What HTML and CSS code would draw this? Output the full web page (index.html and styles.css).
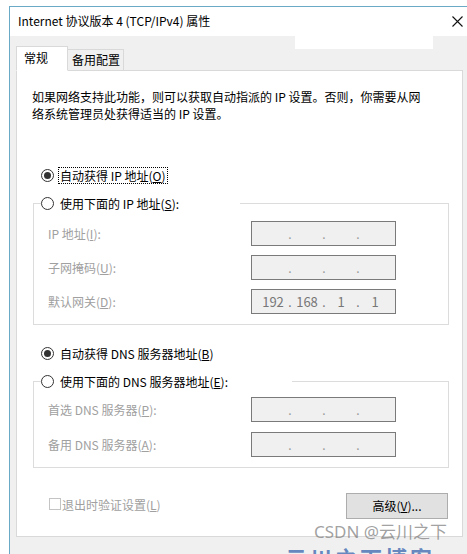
FILE: index.html
```html
<!DOCTYPE html>
<html lang="zh-CN">
<head>
<meta charset="utf-8">
<title>Internet 协议版本 4 (TCP/IPv4) 属性</title>
<link rel="stylesheet" href="styles.css">
</head>
<body>
<div class="window">
  <div class="titlebar">
    <span class="title">Internet 协议版本 4 (TCP/IPv4) 属性</span>
    <svg class="close" width="11" height="11" viewBox="0 0 11 11"><path d="M0.5 0.5L10.5 10.5M10.5 0.5L0.5 10.5" stroke="#111" stroke-width="1.1" fill="none"/></svg>
  </div>
  <div class="tabs">
    <div class="tab active">常规</div>
    <div class="tab">备用配置</div>
  </div>
  <div class="panel">
    <p class="intro">如果网络支持此功能，则可以获取自动指派的 IP 设置。否则，你需要从网<br>络系统管理员处获得适当的 IP 设置。</p>

    <div class="radio-row first">
      <span class="radio checked"></span><span class="rtext focus">自动获得 IP 地址(<u>O</u>)</span>
    </div>

    <fieldset class="group ip">
      <legend class="legend-ip"><span class="radio"></span><span class="rtext">使用下面的 IP 地址(<u>S</u>):</span></legend>
      <div class="fields">
        <span class="flabel">IP 地址(<u>I</u>):</span>
        <div class="ipbox"><span class="oct"></span><span class="dot">.</span><span class="oct"></span><span class="dot">.</span><span class="oct"></span><span class="dot">.</span><span class="oct"></span></div>
        <span class="flabel">子网掩码(<u>U</u>):</span>
        <div class="ipbox"><span class="oct"></span><span class="dot">.</span><span class="oct"></span><span class="dot">.</span><span class="oct"></span><span class="dot">.</span><span class="oct"></span></div>
        <span class="flabel">默认网关(<u>D</u>):</span>
        <div class="ipbox filled"><span class="oct">192</span><span class="dot">.</span><span class="oct">168</span><span class="dot">.</span><span class="oct">1</span><span class="dot">.</span><span class="oct">1</span></div>
      </div>
    </fieldset>

    <div class="radio-row second">
      <span class="radio checked"></span><span class="rtext">自动获得 DNS 服务器地址(<u>B</u>)</span>
    </div>

    <fieldset class="group dns">
      <legend class="legend-dns"><span class="radio"></span><span class="rtext">使用下面的 DNS 服务器地址(<u>E</u>):</span></legend>
      <div class="fields dns-fields">
        <span class="flabel">首选 DNS 服务器(<u>P</u>):</span>
        <div class="ipbox"><span class="oct"></span><span class="dot">.</span><span class="oct"></span><span class="dot">.</span><span class="oct"></span><span class="dot">.</span><span class="oct"></span></div>
        <span class="flabel">备用 DNS 服务器(<u>A</u>):</span>
        <div class="ipbox"><span class="oct"></span><span class="dot">.</span><span class="oct"></span><span class="dot">.</span><span class="oct"></span><span class="dot">.</span><span class="oct"></span></div>
      </div>
    </fieldset>

    <div class="footer">
      <div class="check"><span class="checkbox"></span><span class="ctext">退出时验证设置(<u>L</u>)</span></div>
      <div class="button">高级(<u>V</u>)...</div>
    </div>
  </div>
</div>
<div class="redact"></div>
<div class="watermark">CSDN @云川之下</div>
<div class="wm-blue">云川之下博客</div>
</body>
</html>
```

FILE: styles.css
```css
html, body {
  margin: 0;
  padding: 0;
  background: #ffffff;
  overflow: hidden;
  width: 467px;
  height: 554px;
}
body {
  font-family: "Noto Sans CJK SC", "Noto Sans", sans-serif;
  font-size: 12px;
  color: #000;
  position: relative;
}
.window {
  margin: 6px 0 0 9px;
  width: 470px;
  height: 560px;
  border-top: 1px solid #6aaac6;
  border-left: 1px solid #6aaac6;
  background: #f0f0f0;
}
.titlebar {
  height: 29px;
  background: #fff;
  display: flex;
  align-items: center;
  position: relative;
}
.title {
  margin-left: 8px;
  margin-top: -1px;
  font-size: 12px;
  line-height: 16px;
}
.close {
  position: absolute;
  left: 442px;
  top: 9px;
}
.tabs {
  display: flex;
  align-items: flex-end;
  padding: 10px 0 0 6px;
  height: 25px;
  position: relative;
  z-index: 2;
  margin-bottom: -1px;
}
.tab {
  box-sizing: border-box;
  height: 22px;
  border: 1px solid #d9d9d9;
  background: #f0f0f0;
  padding: 0 3px 0 4px;
  line-height: 20px;
  white-space: nowrap;
  margin-left: -1px;
}
.tab.active {
  margin-left: 0;
  height: 25px;
  width: 52px;
  background: #fff;
  border-bottom-color: #fff;
  padding-left: 7px;
  line-height: 21px;
  position: relative;
  z-index: 3;
}
.panel {
  box-sizing: border-box;
  margin-left: 6px;
  width: 447px;
  height: 467px;
  background: #fff;
  border: 1px solid #d9d9d9;
  padding: 17px 13px 0 15px;
  position: relative;
  z-index: 1;
}
.intro {
  margin: 0;
  line-height: 17px;
}
.radio-row {
  display: flex;
  align-items: center;
  height: 18px;
  margin-left: 9px;
}
.radio-row.first { margin-top: 44px; }
.radio-row.second { margin-top: 19px; }
.radio {
  box-sizing: border-box;
  width: 13px;
  height: 13px;
  border: 1px solid #333;
  border-radius: 50%;
  background: #fff;
  display: inline-flex;
  align-items: center;
  justify-content: center;
  flex: none;
}
.radio.checked::after {
  content: "";
  width: 7px;
  height: 7px;
  border-radius: 50%;
  background: #333;
}
.rtext {
  margin-left: 4px;
  border: 1px solid transparent;
  padding: 0 1px;
  line-height: 15px;
  white-space: nowrap;
}
.rtext.focus { border: 1px dotted #000; }
.group {
  margin: 10px 0 0 1px;
  padding: 0 0 10px 14px;
  border: 1px solid #dcdcdc;
  min-width: 0;
}
.group legend {
  display: flex;
  align-items: center;
  height: 18px;
  padding: 0;
  margin-left: -7px;
  box-sizing: border-box;
}
.legend-ip { width: 199px; }
.legend-dns { width: 251px; }
.fields {
  display: grid;
  grid-template-columns: 203px 145px;
  row-gap: 9px;
  align-items: center;
  padding-top: 9px;
}
.dns-fields { padding-top: 7px; row-gap: 10px; }
.flabel { color: #a0a0a0; }
.ipbox {
  box-sizing: border-box;
  width: 145px;
  height: 25px;
  border: 1px solid #7a7a7a;
  background: #f0f0f0;
  display: flex;
  align-items: center;
  padding-left: 6px;
  color: #777;
  font-size: 13px;
}
.oct { width: 30px; text-align: center; }
.dot { width: 4px; text-align: center; color: #999; font-size: 12px; }
.filled .dot { color: #777; }
.footer {
  display: flex;
  justify-content: space-between;
  align-items: flex-start;
  margin-top: 25px;
}
.check {
  display: flex;
  align-items: center;
  margin-left: 17px;
  margin-top: 2px;
  height: 18px;
}
.checkbox {
  box-sizing: border-box;
  width: 12px;
  height: 12px;
  border: 1px solid #c4c4c4;
  background: #fff;
}
.ctext { margin-left: 1px; color: #a0a0a0; }
.button {
  box-sizing: border-box;
  width: 102px;
  height: 26px;
  margin-right: 1px;
  border: 1px solid #adadad;
  background: #e1e1e1;
  text-align: center;
  line-height: 24px;
}
.redact {
  position: absolute;
  left: 295px;
  top: 13px;
  width: 138px;
  height: 36px;
  background: #fff;
}
.watermark {
  position: absolute;
  left: 314px;
  top: 522px;
  font-family: "Noto Sans", "Noto Sans CJK SC", sans-serif;
  font-size: 17px;
  line-height: 20px;
  color: rgba(120, 120, 120, 0.7);
  z-index: 5;
}
.wm-blue {
  position: absolute;
  left: 285px;
  top: 546px;
  font-size: 22px;
  font-weight: bold;
  line-height: 22px;
  color: rgba(40, 90, 170, 0.7);
  letter-spacing: 3px;
  z-index: 5;
}
```
